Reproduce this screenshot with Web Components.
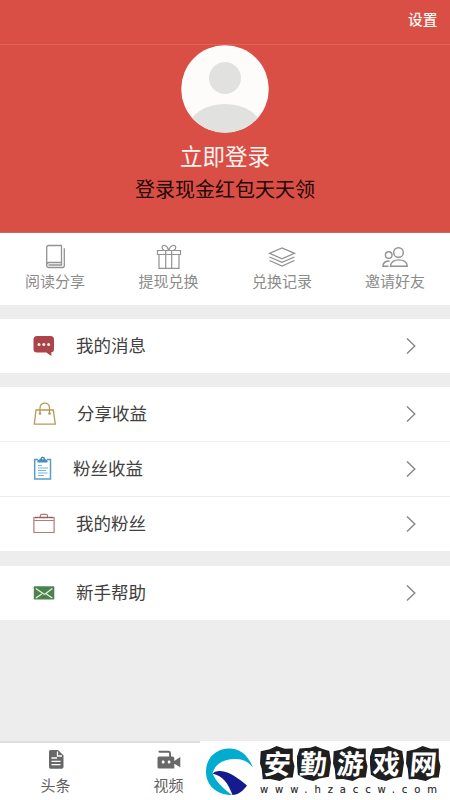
<!DOCTYPE html>
<html lang="zh-CN"><head><meta charset="utf-8"><title>我的</title>
<style>html,body{margin:0;height:100%;overflow:hidden}body{font-family:"Noto Sans CJK SC","Noto Sans",sans-serif}</style></head><body>
<profile-page></profile-page>
<script>
const icons={
book:['0 0 24 26','<g fill="none" stroke="#929292" stroke-width="1.3"><path d="M3.7 21V3.5q0-2 2-2H18.500V18.500H6q-2.300 0-2.300 2.500t2.300 2.500H19.500q1.800 0 1.800-2V4.200M5.500 21H18.500V18.500"/></g>'],
gift:['0 0 26 26','<g fill="none" stroke="#929292" stroke-width="1.2"><path d="M1.500 6.500H24.500V10.500H1.500zM3 10.500V24.300H23V10.500M9.700 6.500V24.300M15.700 6.500V24.300M12.500 6C11 .5 6 .3 6 3.500q0 1.500 2 3M13 6C14.500.5 19.800.3 19.800 3.500q0 1.500-2 3"/></g>'],
layers:['0 0 26 26','<g fill="none" stroke="#929292" stroke-width="1.3"><path d="M.5 9.300L13 4 25.500 9.300 13 14.800zM.5 13L13 18.400 25.500 13M.5 16.500L13 22 25.500 16.500"/></g>'],
people:['0 0 26 26','<g fill="none" stroke="#929292" stroke-width="1.4"><circle cx="16.500" cy="8.500" r="4.800"/><circle cx="6.700" cy="11" r="3.300"/><path d="M8.500 22.200c0-8.500 16.800-8.500 16.800 0zM7.500 17C3 17 1 19 .9 22.200H6.500"/></g>'],
message:['0 0 24 24','<path fill="#ac4549" d="M5 2H18.500q3.500 0 3.500 3.500V15q0 3.200-2.700 3.200L19.400 22 14.300 18.500H5Q1.500 18.500 1.500 15V5.500Q1.500 2 5 2"/><g fill="#fff3eb"><circle cx="7" cy="10.500" r="1.500"/><circle cx="11.800" cy="10.500" r="1.500"/><circle cx="16.600" cy="10.500" r="1.500"/></g>'],
bag:['0 0 24 24','<g fill="none" stroke="#b59b59" stroke-width="1.300"><path d="M4 8H21.300L23.300 22.200H2.300zM8 12V6c0-6.500 9.500-6.500 9.500 0v6"/></g><circle cx="8" cy="11.500" r="1.300" fill="#b59b59"/><circle cx="17.500" cy="11.500" r="1.300" fill="#b59b59"/>'],
clipboard:['0 0 24 24','<path fill="none" stroke="#5a9dc7" stroke-width="1.500" d="M6 2.500H2.700V22H18.500V2.500H15"/><path fill="#438fbd" d="M5.500 5.500V3.300L8.200 2q.3-2.500 2.500-2.500T13.200 2L15.500 3.300V5.500z"/><circle cx="10.700" cy="1.800" r=".7" fill="#fff"/><g stroke="#70b6dd"><path d="M6 8.500h4M6 11h10M6 13.500h8M6 16h9.500M6 18.500h6"/></g>'],
case:['0 0 24 24','<path fill="none" stroke="#b17b7b" stroke-width="1.200" d="M1.900 5.500H22.100V20.500H1.900zM1.900 8.500H22.100M8.300 5.300V3.800Q8.300 2.400 9.800 2.400h4.200q1.500 0 1.500 1.400v1.500"/><path stroke="#965c60" stroke-width="1.300" d="M3 5.500h3.500M7 5.500h9.500M17 5.500h4"/>'],
mail:['0 0 24 24','<rect x="1.800" y="5.300" width="20.500" height="13.200" rx="1" fill="#4d8250"/><path d="M3.800 7.500l8 5.500q.7.400 1.400 0L20.300 7.500M3.800 17l6-4M20.300 17l-6-4" fill="none" stroke="#e5f3dc" stroke-width="1.200"/>'],
arrow:['0 0 12 18','<path d="M2 1.500L9.800 9 2 16.500" fill="none" stroke="#858585" stroke-width="1.400"/>'],
doc:['0 0 18 20','<path d="M3.500 0H11L16.500 5.500V17q0 1.700-1.700 1.700H3.500Q2 18.700 2 17V1.500Q2 0 3.500 0" fill="#686868"/><path d="M10.500 1.500V6H15M4.500 8H10M4.500 11.300H13.500M4.500 14.600H13.500" stroke="#fff" stroke-width="1.300" fill="none"/>'],
video:['0 0 26 20','<path d="M3.500 2.500V1.800H12.500q1.500 0 1.500 1.500V7" fill="none" stroke="#686868" stroke-width="1.900"/><path d="M3 6.500H16.500q1.800 0 1.800 1.800V11L24.300 7V17.300L18.300 13.800V18.500H3Q1.500 18.500 1.500 17V8Q1.500 6.500 3 6.500" fill="#686868"/><path d="M7 10l2 2-2 2-1.500-2zM13 10l1.800 2-1.800 2-1.500-2z" fill="#fff"/>'],
avatar:['0 0 88 88','<defs><clipPath id="a"><circle cx="44" cy="44" r="43.600"/></clipPath></defs><circle cx="44" cy="44" r="43.800" fill="#fdfcfb"/><g clip-path="url(#a)" fill="#e1e1e0"><circle cx="44" cy="33" r="16"/><ellipse cx="44" cy="83" rx="36" ry="24"/></g>'],
wave:['0 0 50 50','<path fill="#00acd0" d="M49 20.500C44 8 36 1.500 25.500 1.500 12 1.500 2 11 2 24.500S12 48 28 48C18 41 11 33 8.500 26 12 15 22 11.500 33 12c7 .3 12 3.500 16 8.500"/><path fill="#151b8e" d="M8.500 26.500Q11 23.500 16 24C26 24.500 35 32 43 38.500 39 44 34 48 28.500 48 24 36 19 29 8.500 26.500"/>']};
class Base extends HTMLElement{
 constructor(){super();this.attachShadow({mode:'open'})}
 connectedCallback(){this.shadowRoot.innerHTML='<style>'+this.css()+'</style>'+this.html()}
}
customElements.define('ui-icon',class extends Base{
 css(){return ':host{display:block;flex:none}svg{display:block;width:100%;height:100%;overflow:visible}'}
 html(){const i=icons[this.getAttribute('name')];return `<svg viewBox="${i[0]}">${i[1]}</svg>`}
});
customElements.define('profile-header',class extends Base{
 css(){return `:host{display:flex;flex-direction:column;height:233px;box-sizing:border-box;background:#d94f45;border-bottom:1px solid #cb675f;color:#fff5f1}
 nav{height:45px;box-sizing:border-box;padding:8px 12.500px 0;text-align:right;font-size:14.700px;line-height:22px;font-weight:500;border-bottom:1px solid #e0645b}
 main{display:flex;flex-direction:column;align-items:center}ui-icon{width:88px;height:88px}
 h1{font-weight:400;font-size:22.500px;line-height:32px;margin:6px 0 0}p{font-size:20px;line-height:30px;margin:3px 0 0;color:#250604}`}
 html(){return '<nav>设置</nav><main><ui-icon name="avatar"></ui-icon><h1><slot name="title"></slot></h1><p><slot></slot></p></main>'}
});
customElements.define('quick-action',class extends Base{
 css(){return ':host{display:flex;flex-direction:column;align-items:center;color:#8b8b8b;font-size:15px;line-height:22px}ui-icon{width:26px;height:26px;margin:11px 0 0}'}
 html(){return `<ui-icon name="${this.getAttribute('icon')}"></ui-icon><span><slot></slot></span>`}
});
customElements.define('menu-row',class extends Base{
 css(){return ':host{display:flex;align-items:center;height:54px;background:#fff;padding:0 33px 0 32px;color:#414141;font-size:17.500px;line-height:26px}.i{width:24px;height:24px}.t{flex:1;margin:0 0 2px var(--gap,20px)}.a{width:12px;height:18px}'}
 html(){return `<ui-icon class="i" name="${this.getAttribute('icon')}"></ui-icon><span class="t"><slot></slot></span><ui-icon class="a" name="arrow"></ui-icon>`}
});
customElements.define('tab-item',class extends Base{
 css(){return ':host{display:flex;flex-direction:column;align-items:center;width:113px;color:#5f5f5f;font-size:15px;line-height:22px}ui-icon{width:26px;height:20px;margin:7px 0 4px}'}
 html(){return `<ui-icon name="${this.getAttribute('icon')}"></ui-icon><span><slot></slot></span>`}
});
customElements.define('site-badge',class extends Base{
 css(){return `:host{display:flex;background:#fff;color:#1c1c1c;box-sizing:border-box;padding:5px 0 0 4px}.logo{width:50px;height:50px;margin-top:1px}
 .r{margin-left:6px}.g{display:flex;gap:2px}.g span{display:grid;place-items:center;width:34.500px;height:35px;background:#1f1f1f;color:#fff;font-size:27px;line-height:33px;clip-path:polygon(2% 15%,28% 9%,48% 0,72% 8%,95% 7%,95% 38%,100% 58%,95% 90%,76% 91%,57% 100%,30% 94%,8% 95%,5% 65%,0 50%)}
 .g span:nth-child(even){clip-path:polygon(0 35%,9% 7%,40% 5%,55% 0,72% 7%,95% 14%,100% 48%,94% 88%,66% 93%,48% 100%,25% 94%,4% 82%)}
 .g b{font-weight:600;transform:translateY(-1px) skewX(-5deg)}.u{font:10px/12px "DejaVu Sans",sans-serif;letter-spacing:6.900px;white-space:nowrap;margin-top:3px;-webkit-text-stroke:.1px #1c1c1c}`}
 html(){return '<ui-icon class="logo" name="wave"></ui-icon><div class="r"><div class="g">'+[...'安勤游戏网'].map(c=>`<span><b>${c}</b></span>`).join('')+'</div><div class="u">www.hzaccw.com</div></div>'}
});
customElements.define('profile-page',class extends Base{
 css(){return `:host{display:flex;flex-direction:column;width:450px;height:800px;position:relative;background:#ededed;overflow:hidden}
 .q{display:grid;grid-template-columns:110px 117px 110px 113px;height:72px;background:#fff}
 .q quick-action:last-child{margin-right:-3px}
 section{margin-top:14px;display:flex;flex-direction:column}.three{gap:1px}.last{margin-top:15px}
 .tabs{display:flex;height:59px;box-sizing:border-box;margin-top:auto;border-top:2px solid #dfdfdf;background:#fff}
 .tabs tab-item:first-child{width:111px}.tabs tab-item:last-of-type{width:115px}
 site-badge{position:absolute;left:200px;top:741px;width:250px;height:59px}`}
 html(){return `<profile-header><span slot="title">立即登录</span>登录现金红包天天领</profile-header>
 <div class="q"><quick-action icon="book">阅读分享</quick-action><quick-action icon="gift">提现兑换</quick-action><quick-action icon="layers">兑换记录</quick-action><quick-action icon="people">邀请好友</quick-action></div>
 <section><menu-row icon="message">我的消息</menu-row></section>
 <section class="three"><menu-row icon="bag" style="--gap:21px">分享收益</menu-row><menu-row icon="clipboard" style="--gap:17px">粉丝收益</menu-row><menu-row icon="case">我的粉丝</menu-row></section>
 <section class="last"><menu-row icon="mail">新手帮助</menu-row></section>
 <div class="tabs"><tab-item icon="doc">头条</tab-item><tab-item icon="video">视频</tab-item></div><site-badge></site-badge>`}
});
</script></body></html>
